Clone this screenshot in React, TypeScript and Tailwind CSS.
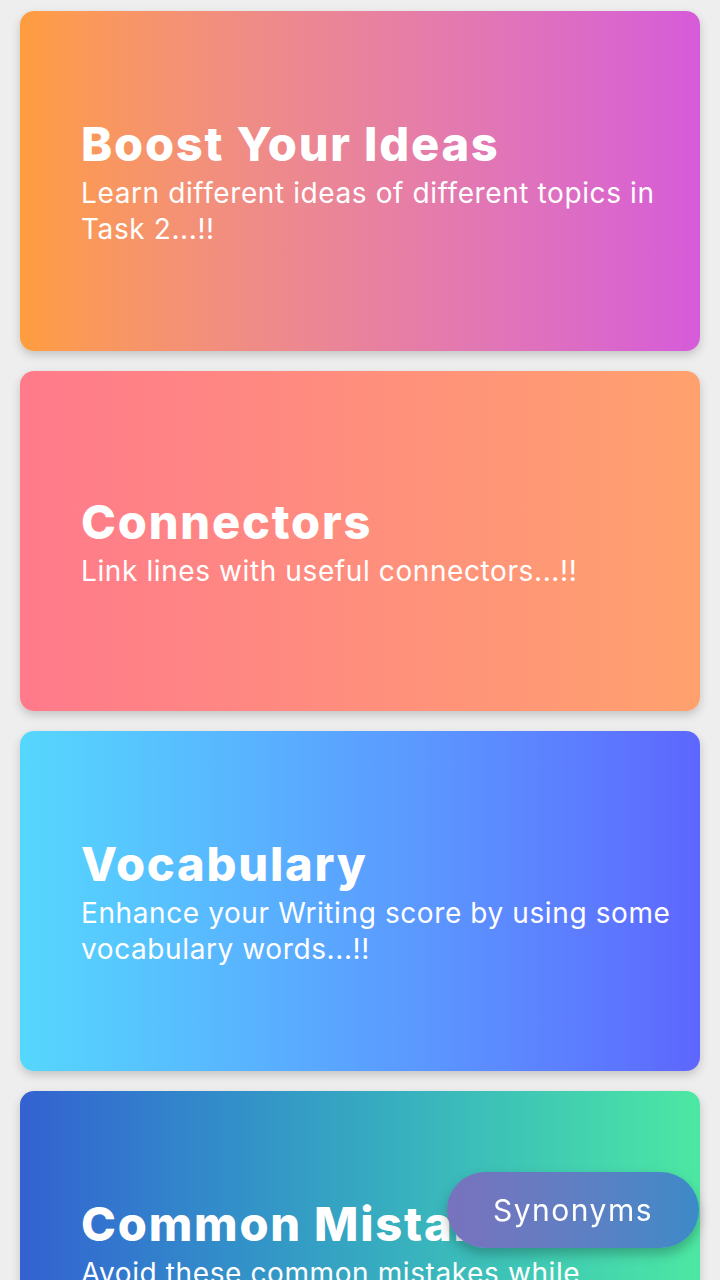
import React from "react";

const cards = [
  {
    title: "Boost Your Ideas",
    text: "Learn different ideas of different topics in Task 2...!!",
    bg: "bg-gradient-to-r from-[#ff9d3e] to-[#d65bd9]",
  },
  {
    title: "Connectors",
    text: "Link lines with useful connectors...!!",
    bg: "bg-gradient-to-r from-[#ff7a8b] to-[#ffa16d]",
  },
  {
    title: "Vocabulary",
    text: "Enhance your Writing score by using some vocabulary words...!!",
    bg: "bg-gradient-to-r from-[#55d7fd] to-[#5d66fe]",
  },
  {
    title: "Common Mistakes",
    text: "Avoid these common mistakes while writing your essay...!!",
    bg: "bg-gradient-to-r from-[#3461d1] to-[#4de8a2]",
  },
];

const TopicCard = ({ title, text, bg }: { title: string; text: string; bg: string }) => {
  return (
    <div
      className={`${bg} h-[340px] shrink-0 rounded-[14px] shadow-[0_4px_10px_rgba(0,0,0,0.18)] flex flex-col justify-center pl-[61px] pr-[24px] text-white`}
    >
      <div className="text-[47px] font-extrabold leading-[56px] tracking-[1.8px]">{title}</div>
      <div className="text-[28px] leading-[36px] tracking-[0.6px] mt-[3px]">{text}</div>
    </div>
  );
};

export default function App() {
  return (
    <div
      className="h-[1280px] overflow-hidden bg-[#eeeeee] px-5 pt-[11px] flex flex-col gap-5"
      style={{ fontFamily: "Inter, 'Noto Sans', sans-serif" }}
    >
      {cards.map((c) => (
        <TopicCard key={c.title} {...c} />
      ))}
      <button className="fixed right-[21px] bottom-[32px] w-[252px] h-[76px] rounded-full bg-gradient-to-r from-[#7872bd] to-[#3b8ac8] text-white text-[30px] tracking-[1.5px] shadow-[0_6px_12px_rgba(0,0,0,0.25)]">
        Synonyms
      </button>
    </div>
  );
}
